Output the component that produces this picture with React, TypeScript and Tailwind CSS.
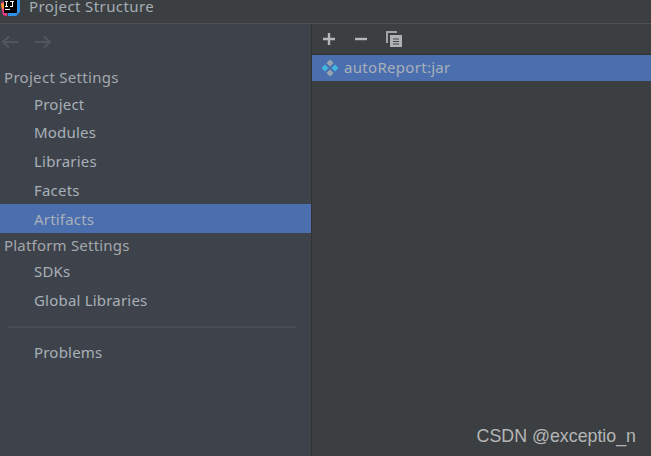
import React from "react";

const font = { fontFamily: '"Noto Sans", sans-serif' };

function NavItem({ label, selected, h }: { label: string; selected?: boolean; h: string }) {
  return (
    <div className={`flex items-center pl-[34px] text-[15px] tracking-[0.2px] text-[#a8b0b8] ${h} ${selected ? "bg-[#4b6eaf]" : ""}`}>
      {label}
    </div>
  );
}

function AppIcon() {
  return (
    <svg width="21" height="17" viewBox="0 0 21 17" className="shrink-0">
      <path d="M1 3 L5 1 L7 16 L3 15 Z" fill="#fc3a8a" />
      <path d="M1 4 L4 3 L5 8 L2 9 Z" fill="#ff9a2e" />
      <path d="M13 0 H20 V12 L16 16 L8 16 L8 13 H13 Z" fill="#2d8fe8" />
      <rect x="4" y="0" width="13" height="13" fill="#000" />
      <rect x="5" y="1" width="3" height="1" fill="#fff" />
      <rect x="6" y="1" width="1" height="5" fill="#fff" />
      <rect x="5" y="6" width="3" height="1" fill="#fff" />
      <rect x="10" y="1" width="4" height="1" fill="#fff" />
      <rect x="12" y="1" width="1" height="6" fill="#fff" />
      <rect x="10" y="6" width="3" height="1" fill="#fff" />
      <rect x="5" y="9" width="5" height="1" fill="#fff" />
    </svg>
  );
}

function Arrow({ flip }: { flip?: boolean }) {
  return (
    <svg width="18" height="14" viewBox="0 0 18 14" className={flip ? "-scale-x-100" : ""}>
      <path d="M17 7 H2 M8 1.5 L2 7 L8 12.5" fill="none" stroke="#53575d" strokeWidth="2" />
    </svg>
  );
}

function ArtifactIcon() {
  return (
    <svg width="18" height="18" viewBox="0 0 18 18" className="shrink-0">
      <path d="M9 0.5 L12.5 4 L9 7.5 L5.5 4 Z" fill="#9aa7b0" />
      <path d="M9 10.5 L12.5 14 L9 17.5 L5.5 14 Z" fill="#9aa7b0" />
      <path d="M4 5.5 L7.5 9 L4 12.5 L0.5 9 Z" fill="#40b6e0" />
      <path d="M14 5.5 L17.5 9 L14 12.5 L10.5 9 Z" fill="#40b6e0" />
    </svg>
  );
}

export default function App() {
  return (
    <div className="relative flex h-[456px] w-[651px] flex-col overflow-hidden bg-[#3c3f41]" style={font}>
      {/* Title bar */}
      <div className="flex h-6 items-center gap-2 border-b border-[#515151] bg-[#3c3f41] pb-[6px]">
        <AppIcon />
        <span className="mb-[4px] text-[15px] leading-[13px] tracking-[0.4px] text-[#a4adb5]">Project Structure</span>
      </div>

      <div className="flex flex-1">
        {/* Sidebar */}
        <div className="flex w-[312px] flex-col border-r border-[#323232] bg-[#3e434b]">
          <div className="flex h-[40px] items-center gap-[15px] pb-1 pl-[1px]">
            <Arrow />
            <Arrow flip />
          </div>
          <div className="flex h-[26px] items-center pl-1 text-[15px] tracking-[0.3px] text-[#a3a8ad]">Project Settings</div>
          <NavItem label="Project" h="h-[28px]" />
          <NavItem label="Modules" h="h-[29px]" />
          <NavItem label="Libraries" h="h-[29px]" />
          <NavItem label="Facets" h="h-[28px]" />
          <NavItem label="Artifacts" h="h-[29px] pt-[2px]" selected />
          <div className="flex h-[25px] items-center pl-1 text-[15px] tracking-[0.2px] text-[#a3a8ad]">Platform Settings</div>
          <NavItem label="SDKs" h="h-[27px]" />
          <NavItem label="Global Libraries" h="h-[30px]" />
          <div className="mx-[8px] mt-[11px] h-[2px] w-[288px] bg-[#484b50]" />
          <NavItem label="Problems" h="h-[48px]" />
        </div>

        {/* Artifacts list */}
        <div className="flex flex-1 flex-col">
          <div className="flex h-[31px] items-center gap-4 border-b border-[#323232] pl-[9px]">
            <svg width="16" height="16" viewBox="0 0 16 16">
              <path d="M8 2 V14 M2 8 H14" stroke="#b4b8bb" strokeWidth="2.4" />
            </svg>
            <svg width="16" height="16" viewBox="0 0 16 16">
              <path d="M2 8 H14" stroke="#b4b8bb" strokeWidth="2.4" />
            </svg>
            <svg width="17" height="17" viewBox="0 0 17 17" className="ml-px">
              <path d="M1 12 V1 H11" fill="none" stroke="#a0a4a7" strokeWidth="2" />
              <rect x="4" y="4" width="12" height="12" fill="#aeb2b5" />
              <path d="M7 8 H13 M7 10.5 H13 M7 13 H13" stroke="#45484a" strokeWidth="1" />
            </svg>
          </div>
          <div className="flex h-[26px] items-center gap-[5px] bg-[#4b6eaf] pb-[1px] pl-[9px] text-[15px] tracking-[0.3px] text-[#a8b0b8]">
            <ArtifactIcon />
            autoReport:jar
          </div>
        </div>
      </div>

      {/* Watermark */}
      <span
        className="absolute right-[15px] top-[424px] text-[17.8px] leading-6 text-[#b4b6b7]"
        style={{ fontFamily: '"Liberation Sans", sans-serif' }}
      >
        CSDN @exceptio_n
      </span>
    </div>
  );
}
